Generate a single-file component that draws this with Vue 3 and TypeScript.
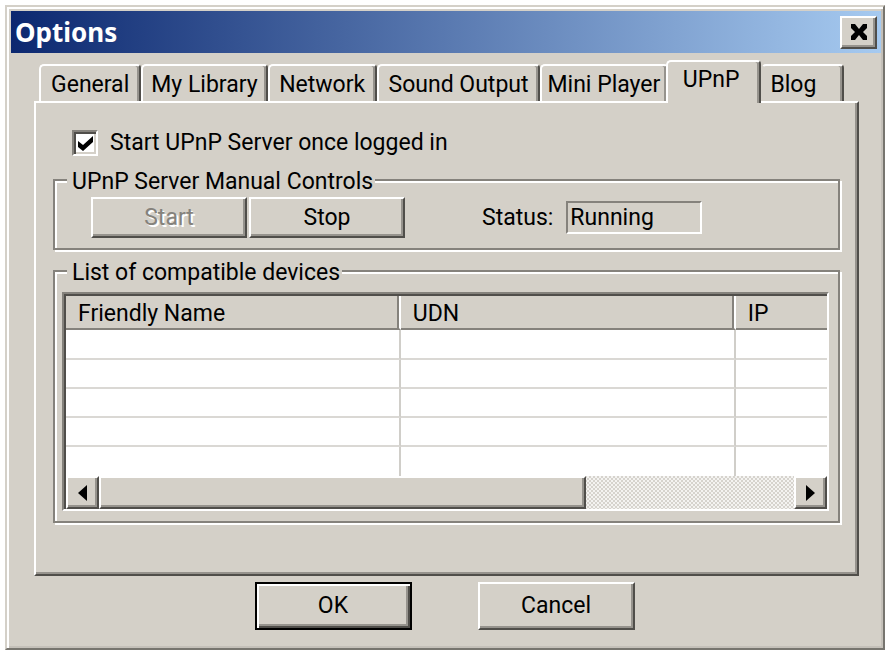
<script setup lang="ts">
import { ref } from 'vue'

const tabs: string[] = ['General', 'My Library', 'Network', 'Sound Output', 'Mini Player', 'UPnP', 'Blog']
const activeTab = ref('UPnP')
const startOnLogin = ref(true)
const running = ref(true)
const columns: string[] = ['Friendly Name', 'UDN', 'IP']
const emptyRows = 5
</script>

<template>
  <main class="window">
    <header class="titlebar">
      <h1>Options</h1>
      <button class="close raised" type="button" aria-label="Close">
        <svg viewBox="0 0 18 18" width="18" height="18">
          <path d="M1 1h4l4 5 4-5h4v4l-4 4 4 4v4h-4l-4-5-4 5H1v-4l4-4-4-4z" />
        </svg>
      </button>
    </header>

    <div class="body">
      <nav class="tabs" role="tablist">
        <button
          v-for="tab in tabs"
          :key="tab"
          type="button"
          role="tab"
          class="tab"
          :class="{ active: tab === activeTab }"
          :aria-selected="tab === activeTab"
          @click="activeTab = tab"
        >{{ tab }}</button>
      </nav>

      <section class="page">
        <label class="check">
          <input v-model="startOnLogin" type="checkbox" />
          <span class="box">
            <svg v-if="startOnLogin" viewBox="0 0 15 15" width="15" height="15">
              <path d="M0 5v6l5 4L15 6V0L5 9z" />
            </svg>
          </span>
          <span>Start UPnP Server once logged in</span>
        </label>

        <fieldset class="group">
          <legend>UPnP Server Manual Controls</legend>
          <div class="controls">
            <button class="push raised" type="button" :disabled="running" @click="running = true">Start</button>
            <button class="push raised" type="button" :disabled="!running" @click="running = false">Stop</button>
            <label class="status-label" for="status">Status:</label>
            <input id="status" class="status" type="text" readonly :value="running ? 'Running' : 'Stopped'" />
          </div>
        </fieldset>

        <fieldset class="group devices">
          <legend>List of compatible devices</legend>
          <div class="list">
            <table>
              <thead>
                <tr><th v-for="column in columns" :key="column" scope="col">{{ column }}</th></tr>
              </thead>
              <tbody>
                <tr v-for="row in emptyRows" :key="row">
                  <td v-for="column in columns" :key="column"></td>
                </tr>
              </tbody>
            </table>
            <div class="scrollbar">
              <button class="arrow raised" type="button" aria-label="Scroll left">
                <svg viewBox="0 0 9 16" width="9" height="16"><path d="M9 0v16L0 8z" /></svg>
              </button>
              <div class="track"><div class="thumb raised"></div></div>
              <button class="arrow raised" type="button" aria-label="Scroll right">
                <svg viewBox="0 0 9 16" width="9" height="16"><path d="M0 0v16l9-8z" /></svg>
              </button>
            </div>
          </div>
        </fieldset>
      </section>

      <footer class="actions">
        <button class="push raised default" type="button">OK</button>
        <button class="push raised" type="button">Cancel</button>
      </footer>
    </div>
  </main>
</template>

<style>
body {
  margin: 0;
  background: #fff;
}
</style>

<style scoped>
* {
  box-sizing: border-box;
}

.window {
  margin: 5px 2px 0 5px;
  padding: 2px;
  background: #d4d0c8;
  border: 2px solid #d4d0c8;
  border-right-color: #77756f;
  border-bottom-color: #77756f;
  box-shadow: inset 2px 2px 0 #fff, inset -2px -2px 0 #c4c0b9;
  color: #000;
  font: 23px/30px Roboto, "Liberation Sans", sans-serif;
}

button,
input {
  font: inherit;
  color: inherit;
}

button {
  padding: 0;
  border: 0;
  background: #d4d0c8;
}

.raised {
  background: #d4d0c8;
  border: 2px solid;
  border-color: #fff #504e4a #504e4a #fff;
  box-shadow: inset -2px -2px 0 #96938d;
}

.titlebar {
  display: flex;
  align-items: center;
  justify-content: space-between;
  height: 42px;
  margin: 2px 0 0 2px;
  padding: 0 4px;
  background: linear-gradient(90deg, #0c2870, #a6caf0);
}

.titlebar h1 {
  margin: 0;
  color: #fff;
  font: bold 26px/32px "Noto Sans", "Open Sans", sans-serif;
}

.close {
  display: grid;
  place-items: center;
  width: 37px;
  height: 33px;
}

.body {
  padding: 7px 22px 16px 25px;
}

.tabs {
  display: grid;
  grid-template-columns: 102fr 126fr 109fr 163fr 127fr 93fr 83fr;
  align-items: end;
  height: 41px;
  padding: 0 15px 0 5px;
}

.tab {
  min-width: 0;
  height: 37px;
  padding-top: 2px;
  border: 2px solid;
  border-color: #fff #504e4a transparent #fff;
  border-bottom: 0;
  border-radius: 5px 4px 0 0;
  box-shadow: inset -2px 0 0 #96938d;
  white-space: nowrap;
}

.tab:last-child {
  padding-right: 18px;
}

.tab.active {
  position: relative;
  height: 43px;
  margin: 0 0 -2px -2px;
  padding: 0 4px 6px 0;
}

.tab.active + .tab {
  border-left-color: #d4d0c8;
}

.page {
  padding: 24px 15px 51px 17px;
  border: 2px solid;
  border-color: #fff #504e4a #504e4a #fff;
  box-shadow: inset -2px -2px 0 #96938d;
}

.check {
  display: inline-flex;
  align-items: center;
  gap: 12px;
  height: 32px;
  padding-left: 19px;
}

.check input {
  position: absolute;
  opacity: 0;
}

.box {
  display: grid;
  place-items: center;
  width: 26px;
  height: 26px;
  background: #fff;
  border: 2px solid;
  border-color: #85827c #fff #fff #85827c;
  box-shadow: inset 2px 2px 0 #504e4a, inset -2px -2px 0 #d4d0c8;
}

.group {
  min-width: 0;
  margin: 7px 2px 0 0;
  padding: 0 9px 10px 7px;
  border: 2px solid #85827c;
  box-shadow: 2px 2px 0 #fff, inset 2px 2px 0 #fff;
}

.group legend {
  height: 28px;
  margin-left: 5px;
  padding: 0 2px 0 5px;
  background: #d4d0c8;
  line-height: 32px;
}

.controls {
  display: flex;
  align-items: center;
  gap: 2px;
  padding: 3px 0 0 29px;
}

.push {
  width: 156px;
  height: 41px;
}

.push:disabled {
  color: #85827c;
  text-shadow: 2px 2px 0 #fff;
}

.status-label {
  margin-left: 75px;
}

.status {
  width: 136px;
  height: 33px;
  margin-left: 11px;
  padding: 0 2px;
  background: #d4d0c8;
  border: 2px solid;
  border-color: #85827c #fff #fff #85827c;
  outline: 0;
}

.list {
  margin-top: 7px;
  background: #fff;
  border: 2px solid;
  border-color: #85827c #fff #fff #85827c;
  box-shadow: inset 2px 2px 0 #504e4a;
  padding: 2px 0 0 2px;
}

table {
  width: 100%;
  table-layout: fixed;
  border-collapse: separate;
  border-spacing: 0;
}

th {
  height: 34px;
  padding: 4px 0 0 12px;
  background: #d4d0c8;
  border-bottom: 2px solid #85827c;
  border-right: 2px solid #fff;
  box-shadow: inset -2px 0 0 #85827c;
  font-weight: normal;
  line-height: 28px;
  text-align: left;
}

th:first-child,
th:nth-child(2) {
  width: 44%;
}

th:last-child {
  border-right: 0;
  box-shadow: none;
}

td {
  height: 29px;
  padding: 0;
  border-bottom: 2px solid #dad8d4;
  border-right: 2px solid #d0cec9;
}

td:last-child {
  border-right: 0;
}

tbody tr:first-child td {
  height: 30px;
}

tbody tr:last-child td {
  border-bottom: 0;
}

.scrollbar {
  display: flex;
  height: 33px;
}

.arrow {
  display: grid;
  flex: none;
  place-items: center;
  width: 33px;
  height: 33px;
}

.track {
  flex: 1;
  background: repeating-conic-gradient(#d6d3cd 0 25%, #f4f3f1 0 50%) 0 0 / 4px 4px;
}

.thumb {
  width: 70%;
  height: 100%;
}

.actions {
  display: flex;
  justify-content: center;
  gap: 66px;
  padding: 6px 4px 0 0;
}

.actions .push {
  width: 157px;
  height: 48px;
}

.default {
  border-color: #000;
  box-shadow: inset 2px 2px 0 #fff, inset -2px -2px 0 #504e4a, inset -4px -4px 0 #96938d;
}
</style>
